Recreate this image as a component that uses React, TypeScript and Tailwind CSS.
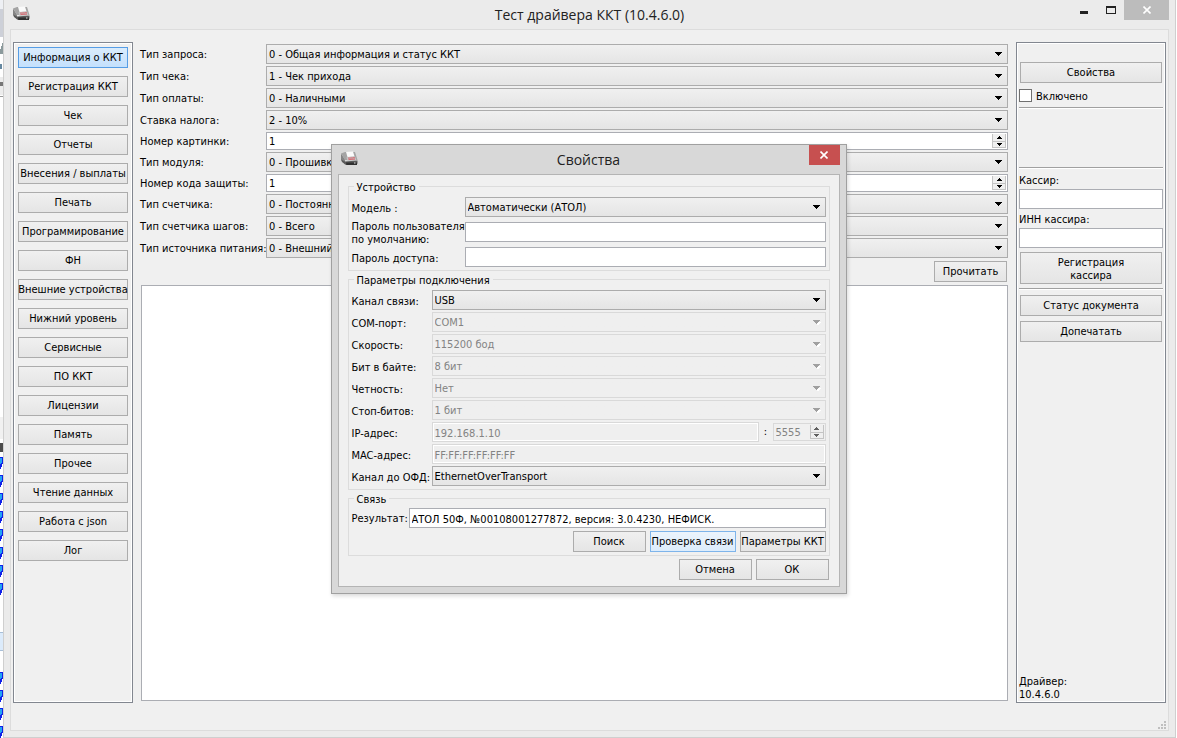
import { useId, type ReactNode } from "react";

const sections = [
  "Информация о ККТ", "Регистрация ККТ", "Чек", "Отчеты", "Внесения / выплаты", "Печать",
  "Программирование", "ФН", "Внешние устройства", "Нижний уровень", "Сервисные", "ПО ККТ",
  "Лицензии", "Память", "Прочее", "Чтение данных", "Работа с json", "Лог",
];

type Param = { label: string; value: string; kind?: "spin" };

const queryParams: Param[] = [
  { label: "Тип запроса:", value: "0 - Общая информация и статус ККТ" },
  { label: "Тип чека:", value: "1 - Чек прихода" },
  { label: "Тип оплаты:", value: "0 - Наличными" },
  { label: "Ставка налога:", value: "2 - 10%" },
  { label: "Номер картинки:", value: "1", kind: "spin" },
  { label: "Тип модуля:", value: "0 - Прошивка" },
  { label: "Номер кода защиты:", value: "1", kind: "spin" },
  { label: "Тип счетчика:", value: "0 - Постоянный" },
  { label: "Тип счетчика шагов:", value: "0 - Всего" },
  { label: "Тип источника питания:", value: "0 - Внешний" },
];

const portParams = [
  { label: "COM-порт:", value: "COM1" },
  { label: "Скорость:", value: "115200 бод" },
  { label: "Бит в байте:", value: "8 бит" },
  { label: "Четность:", value: "Нет" },
  { label: "Стоп-битов:", value: "1 бит" },
];

function Button({ children, tone = "normal", className = "" }: { children: ReactNode; tone?: "normal" | "active" | "focus"; className?: string }) {
  const tones = {
    normal: "border-[#acacac] bg-linear-to-b from-[#f0f0f0] to-[#e5e5e5]",
    active: "border-[#569de5] bg-linear-to-b from-[#daecfc] to-[#c4e0fc]",
    focus: "border-[#7eb4ea] bg-linear-to-b from-[#ecf4fc] to-[#dcecfc]",
  };
  return (
    <button type="button" className={`flex h-[21px] shrink-0 items-center justify-center border pt-px whitespace-nowrap ${tones[tone]} ${className}`}>
      {children}
    </button>
  );
}

function Select({ id, value, disabled }: { id: string; value: string; disabled?: boolean }) {
  return (
    <div className="relative min-w-0 flex-1">
      <select
        id={id}
        disabled={disabled}
        className="block h-5 w-full appearance-none border border-[#acacac] bg-linear-to-b from-[#f0f0f0] to-[#e5e5e5] pt-[2px] pl-[2px] text-black opacity-100 disabled:border-[#d9d9d9] disabled:from-[#efefef] disabled:to-[#efefef] disabled:text-[#838383]"
      >
        <option>{value}</option>
      </select>
      <svg className={`pointer-events-none absolute top-2 right-[5px] ${disabled ? "text-[#a0a0a0]" : "text-black"}`} width="8" height="5" shapeRendering="crispEdges" aria-hidden="true">
        {disabled && <path d="M2 2h6v1h-1v1h-1v1h-2v-1h-1v-1h-1z" fill="#fff" />}
        <path d="M0 0h7v1h-1v1h-1v1h-1v1h-1v-1h-1v-1h-1v-1h-1z" fill="currentColor" />
      </svg>
    </div>
  );
}

function Spin({ id, value, disabled }: { id: string; value: string; disabled?: boolean }) {
  const arrow = `flex w-full items-center justify-center border-x border-[#c4c4c4] bg-[#efefef] ${disabled ? "text-[#606060]" : "text-black"}`;
  return (
    <div className={`flex h-[18px] min-w-0 flex-1 border p-px ${disabled ? "border-[#d9d9d9]" : "border-[#abadb3] bg-white"}`}>
      <input id={id} defaultValue={value} disabled={disabled} className="h-[14px] w-0 min-w-0 flex-1 pt-px pl-px disabled:text-[#838383]" />
      <div className="flex w-[14px] flex-col">
        <button type="button" aria-label="Больше" disabled={disabled} className={`h-[7px] ${arrow}`}>
          <svg width="5" height="3" shapeRendering="crispEdges"><path d="M2 0h1v1h1v1h1v1h-5v-1h1v-1h1z" fill="currentColor" /></svg>
        </button>
        <button type="button" aria-label="Меньше" disabled={disabled} className={`h-[7px] border-y ${arrow}`}>
          <svg width="5" height="3" shapeRendering="crispEdges"><path d="M0 0h5v1h-1v1h-1v1h-1v-1h-1v-1h-1z" fill="currentColor" /></svg>
        </button>
      </div>
    </div>
  );
}

function TextField({ id, value, disabled, className = "" }: { id: string; value?: string; disabled?: boolean; className?: string }) {
  return (
    <input
      id={id}
      type="text"
      defaultValue={value}
      disabled={disabled}
      className={`h-5 min-w-0 border border-[#abadb3] bg-white px-[2px] pt-[2px] text-black disabled:border-[#d9d9d9] disabled:bg-[#efefef] disabled:text-[#838383] disabled:inset-ring disabled:inset-ring-white ${className}`}
    />
  );
}

function ParamRow({ label, value, kind }: Param) {
  const id = useId();
  return (
    <div className="flex items-center">
      <label htmlFor={id} className="w-[126px] shrink-0 pt-[2px] whitespace-nowrap">{label}</label>
      {kind === "spin" ? <Spin id={id} value={value} /> : <Select id={id} value={value} />}
    </div>
  );
}

function DialogRow({ label, wide, children }: { label: ReactNode; wide?: boolean; children: (id: string) => ReactNode }) {
  const id = useId();
  return (
    <div className="flex h-5 items-center">
      <label htmlFor={id} className={`shrink-0 pt-[2px] whitespace-nowrap leading-[13px] ${wide ? "w-[113px]" : "w-[80px]"}`}>{label}</label>
      {children(id)}
    </div>
  );
}

function Group({ title, className, children }: { title: string; className: string; children: ReactNode }) {
  return (
    <fieldset className={`flex min-w-0 flex-col border border-[#dcdcdc] px-[3px] pb-[3px] ${className}`}>
      <legend className="ml-[2px] h-[15px] px-[3px] pt-px leading-[15px]">{title}</legend>
      {children}
    </fieldset>
  );
}

function Printer() {
  return (
    <svg width="17" height="16" viewBox="0 0 17 16" aria-hidden="true">
      <path d="M0 2.500 4 8.500v5L0 8.500z" fill="#858585" />
      <path d="M0 2.500 4 1h10l2.500 8H4z" fill="#a4a4a4" />
      <path d="M5 1 12 .5l1.500 5L6.500 6z" fill="#fafafa" />
      <path d="M5.500 6.200 14 5.500l1.500 4-9 .5z" fill="#c6c6c6" />
      <path d="M7 7.400l1-.6 1 .5 1-.6 1 .5 1-.5 2 .1M7.500 8.500l6.500-.4" fill="none" stroke="#d8525c" strokeWidth=".8" />
      <path d="M0 8.500 4 10.500l12.500-1v3L15 14H5L1 11z" fill="#5a5a5a" />
      <path d="M5 11.500h11V14H5.500z" fill="#303030" />
      <path d="M13 11.500h1.500v1H13z" fill="#ddd" />
    </svg>
  );
}

function Rule({ className }: { className: string }) {
  return <hr className={`h-[2px] shrink-0 border-t border-b border-t-[#a0a0a0] border-b-white ${className}`} />;
}

/* Sliver of the desktop that shows at the left of the window. */
function DesktopEdge() {
  const icons = [457, 475, 493, 511, 529, 547, 565, 583, 672, 690, 708, 726];
  return (
    <svg className="absolute inset-y-0 left-0 w-[3px]" height="738" shapeRendering="crispEdges" aria-hidden="true">
      <rect width="3" height="9" fill="#eef0f4" />
      <rect y="9" width="3" height="28" fill="#cdd0d8" />
      <path d="M3 42v12H0v-3z" fill="#8b9a9c" />
      <path d="M0 64h2v5H0z" fill="#6688a0" />
      <rect y="77" width="3" height="18" fill="#ececec" />
      <rect y="82" width="3" height="4" fill="#777" />
      <rect y="96" width="3" height="1" fill="#999" />
      <rect y="417" width="3" height="22" fill="#f1f1f1" />
      <rect y="443" width="3" height="9" fill="#4b4b4b" />
      {icons.map((y) => (
        <g key={y}>
          <path d={`M0 ${y}h3v5l-1 4-1 3H0z`} fill="#1020e8" />
          <path d={`M0 ${y + 1}h2v4l-2 3z`} fill="#22a4f4" />
        </g>
      ))}
      <rect y="632" width="3" height="19" fill="#dcebfb" />
      <path d="M0 632h3v1H0zM0 650h3v1H0z" fill="#a8bfd8" />
    </svg>
  );
}

function PropertiesDialog() {
  return (
    <div role="dialog" aria-label="Свойства" className="w-[516px] max-w-full border border-[#a0a0a0] bg-[#d8d8d8] px-[6px] pb-[6px] shadow-[1px_2px_4px_rgba(0,0,0,0.15)]">
      <header className="relative flex h-[29px] items-center justify-center">
        <span className="absolute top-[6px] left-[3px]"><Printer /></span>
        <h2 className="font-['Open_Sans','Noto_Sans',sans-serif] text-[14px] text-[#222]">Свойства</h2>
        <button type="button" aria-label="Закрыть" className="absolute top-0 right-0 flex h-5 w-[31px] items-center justify-center bg-[#c75050]">
          <svg width="8" height="8" aria-hidden="true"><path d="M.5.5l7 7M7.500.5l-7 7" stroke="#fff" strokeWidth="1.600" /></svg>
        </button>
      </header>
      <div className="flex flex-col gap-px border border-[#b4b4b4] bg-[#f0f0f0] px-[9px] pt-1 pb-[6px]">
        <Group title="Устройство" className="gap-[5px] pt-[3px]">
          <DialogRow label="Модель :" wide>{(id) => <Select id={id} value="Автоматически (АТОЛ)" />}</DialogRow>
          <DialogRow label={<>Пароль пользователя<br />по умолчанию:</>} wide>{(id) => <TextField id={id} className="flex-1" />}</DialogRow>
          <DialogRow label="Пароль доступа:" wide>{(id) => <TextField id={id} className="flex-1" />}</DialogRow>
        </Group>
        <Group title="Параметры подключения" className="gap-[2px] pt-[3px]">
          <DialogRow label="Канал связи:">{(id) => <Select id={id} value="USB" />}</DialogRow>
          {portParams.map((p) => (
            <DialogRow key={p.label} label={p.label}>{(id) => <Select id={id} value={p.value} disabled />}</DialogRow>
          ))}
          <DialogRow label="IP-адрес:">
            {(id) => (
              <>
                <TextField id={id} value="192.168.1.10" disabled className="flex-1" />
                <label htmlFor="ip-port" className="w-[14px] text-center">:</label>
                <div className="flex w-[53px]"><Spin id="ip-port" value="5555" disabled /></div>
              </>
            )}
          </DialogRow>
          <DialogRow label="MAC-адрес:">{(id) => <TextField id={id} value="FF:FF:FF:FF:FF:FF" disabled className="flex-1" />}</DialogRow>
          <DialogRow label="Канал до ОФД:">{(id) => <Select id={id} value="EthernetOverTransport" />}</DialogRow>
        </Group>
        <Group title="Связь" className="gap-[3px] pt-[2px]">
          <div className="flex items-center">
            <label htmlFor="link-result" className="w-[57px] shrink-0 pt-[2px] whitespace-nowrap">Результат:</label>
            <TextField id="link-result" value="АТОЛ 50Ф, №00108001277872, версия: 3.0.4230, НЕФИСК." className="flex-1" />
          </div>
          <div className="flex justify-end gap-1">
            <Button className="w-[73px]">Поиск</Button>
            <Button tone="focus" className="w-[86px]">Проверка связи</Button>
            <Button className="w-[86px]">Параметры ККТ</Button>
          </div>
        </Group>
        <div className="flex justify-end gap-1 pt-[2px] pr-px">
          <Button className="w-[73px]">Отмена</Button>
          <Button className="w-[73px]">ОК</Button>
        </div>
      </div>
    </div>
  );
}

export default function App() {
  return (
    <div className="relative flex min-h-screen bg-white pr-px pl-[3px] font-['DejaVu_Sans_Condensed','DejaVu_Sans',sans-serif] text-[11px] leading-[14px] text-black">
      <DesktopEdge />
      <div className="flex min-w-0 flex-1 flex-col border-x border-b border-[#cfcfcf] bg-[#ebebeb] px-[6px] pb-[6px]">
        <header className="relative flex h-[29px] shrink-0 items-center justify-center">
          <span className="absolute top-[6px] left-[3px]"><Printer /></span>
          <h1 className="font-['Open_Sans','Noto_Sans',sans-serif] text-[14px] text-[#222]">Тест драйвера ККТ (10.4.6.0)</h1>
          <div className="absolute top-0 right-0 flex">
            <button type="button" aria-label="Свернуть" className="flex h-5 w-[27px] items-center justify-center pt-1">
              <svg width="8" height="3" aria-hidden="true"><path d="M0 0h8v3H0z" fill="#222" /></svg>
            </button>
            <button type="button" aria-label="Развернуть" className="flex h-5 w-[27px] items-center justify-center">
              <svg width="10" height="8" shapeRendering="crispEdges" aria-hidden="true"><path d="M0 0h10v8H0zM1 2v5h8V2z" fill="#222" fillRule="evenodd" /></svg>
            </button>
            <button type="button" aria-label="Закрыть" className="flex h-5 w-[45px] items-center justify-center bg-[#bcbcbc]">
              <svg width="8" height="8" aria-hidden="true"><path d="M.5.5l7 7M7.500.5l-7 7" stroke="#fff" strokeWidth="1.600" /></svg>
            </button>
          </div>
        </header>

        <main className="relative flex flex-1 border border-[#dcdcdc] bg-[#f0f0f0] px-[2px] pt-3 pb-[27px]">
          <nav className="flex w-[120px] shrink-0 flex-col gap-2 border border-[#828790] p-1 inset-ring inset-ring-white">
            {sections.map((s, i) => (
              <Button key={s} tone={i === 0 ? "active" : "normal"}>{s}</Button>
            ))}
          </nav>

          <section className="mx-2 flex min-w-0 flex-1 flex-col gap-[3px] pt-[2px] pb-[2px]">
            <div className="-ml-px flex flex-col gap-[2px]">
              {queryParams.map((p) => <ParamRow key={p.label} {...p} />)}
            </div>
            <Button className="mr-px w-[73px] self-end">Прочитать</Button>
            <textarea aria-label="Результат запроса" readOnly className="block w-full flex-1 resize-none border border-[#abadb3] bg-white" />
          </section>

          <aside className="flex w-[150px] shrink-0 flex-col border border-[#828790] px-[2px] pb-px inset-ring inset-ring-white">
            <Button className="mx-px mt-[19px]">Свойства</Button>
            <label className="mt-[6px] flex h-[13px] items-center gap-1">
              <input type="checkbox" className="size-[13px] appearance-none border border-[#707070] bg-white checked:bg-[#569de5]" />
              <span className="pt-[2px]">Включено</span>
            </label>
            <Rule className="mt-[5px]" />
            <Rule className="mt-[58px]" />
            <label htmlFor="cashier" className="mt-[5px]">Кассир:</label>
            <TextField id="cashier" className="mt-px w-full shrink-0" />
            <label htmlFor="cashier-inn" className="mt-1">ИНН кассира:</label>
            <TextField id="cashier-inn" className="mt-px w-full shrink-0" />
            <button type="button" className="mx-px mt-1 h-8 border border-[#acacac] bg-linear-to-b from-[#f0f0f0] to-[#e5e5e5] pt-px leading-[13px]">
              Регистрация<br />кассира
            </button>
            <Rule className="mt-1" />
            <Button className="mx-px mt-[5px]">Статус документа</Button>
            <Button className="mx-px mt-[5px]">Допечатать</Button>
            <p className="mt-auto leading-[13px]">Драйвер:<br />10.4.6.0</p>
          </aside>

          <svg className="absolute right-[2px] bottom-px" width="8" height="8" fill="#bfbfbf" shapeRendering="crispEdges" aria-hidden="true">
            <path d="M6 0h2v2H6zM3 3h2v2H3zM6 3h2v2H6zM0 6h2v2H0zM3 6h2v2H3zM6 6h2v2H6z" />
          </svg>
        </main>
      </div>
      <div className="pointer-events-none absolute inset-0 grid place-items-center">
        <div className="pointer-events-auto"><PropertiesDialog /></div>
      </div>
    </div>
  );
}
